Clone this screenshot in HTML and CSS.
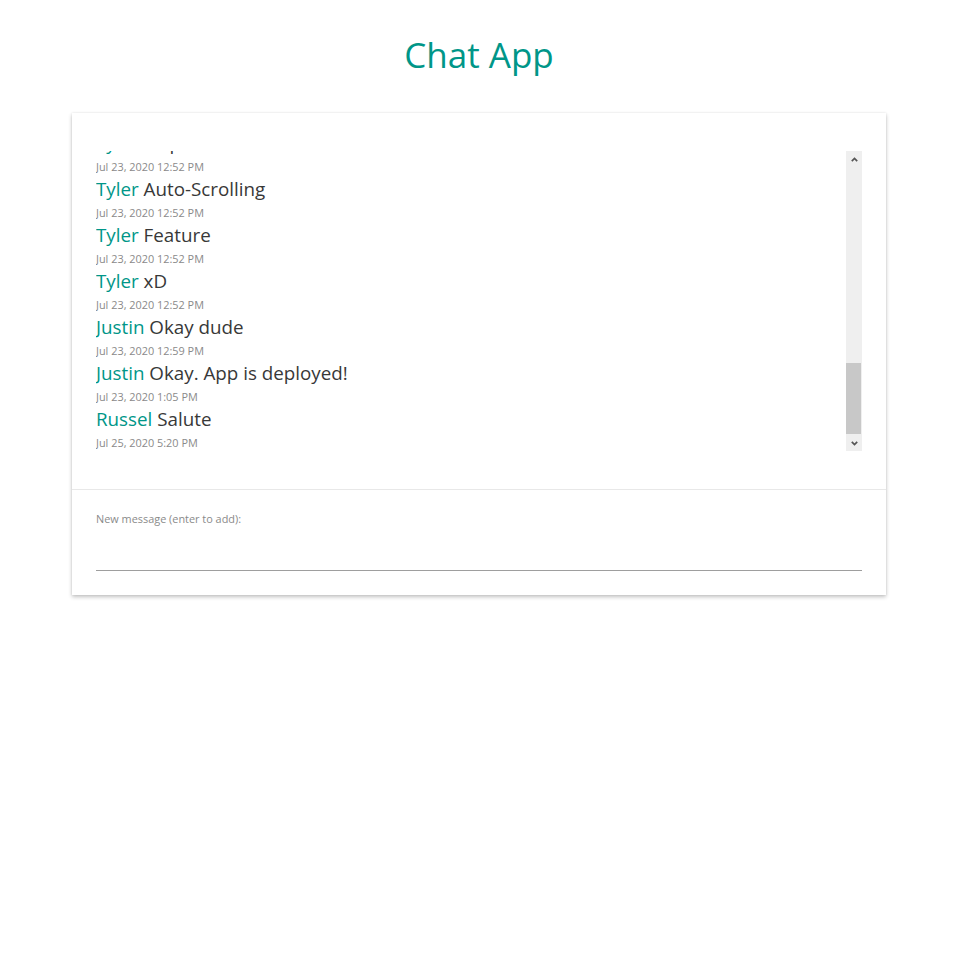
FILE: index.html
```html
<!DOCTYPE html>
<html lang="en">
<head>
<meta charset="utf-8">
<title>Chat App</title>
<link rel="stylesheet" href="styles.css">
</head>
<body>
<h1 class="title">Chat App</h1>
<main class="card">
  <section class="messages-wrap">
    <div class="messages">
      <div class="messages-inner">
        <div class="msg"><div class="line"><span class="name">Tyler</span> Test 2</div><div class="time">Jul 23, 2020 12:51 PM</div></div>
        <div class="msg"><div class="line"><span class="name">Tyler</span> Oops</div><div class="time">Jul 23, 2020 12:52 PM</div></div>
        <div class="msg"><div class="line"><span class="name">Tyler</span> Auto-Scrolling</div><div class="time">Jul 23, 2020 12:52 PM</div></div>
        <div class="msg"><div class="line"><span class="name">Tyler</span> Feature</div><div class="time">Jul 23, 2020 12:52 PM</div></div>
        <div class="msg"><div class="line"><span class="name">Tyler</span> xD</div><div class="time">Jul 23, 2020 12:52 PM</div></div>
        <div class="msg"><div class="line"><span class="name">Justin</span> Okay dude</div><div class="time">Jul 23, 2020 12:59 PM</div></div>
        <div class="msg"><div class="line"><span class="name">Justin</span> Okay. App is deployed!</div><div class="time">Jul 23, 2020 1:05 PM</div></div>
        <div class="msg"><div class="line"><span class="name">Russel</span> Salute</div><div class="time">Jul 25, 2020 5:20 PM</div></div>
      </div>
    </div>
    <div class="scrollbar" aria-hidden="true">
      <span class="sb-btn">
        <svg class="chev" width="7" height="5" viewBox="0 0 7 5"><path d="M0.8 4.2L3.5 1.4L6.2 4.2" fill="none" stroke="#555" stroke-width="1.7"/></svg>
      </span>
      <div class="sb-track"><div class="sb-thumb"></div></div>
      <span class="sb-btn">
        <svg class="chev" width="7" height="5" viewBox="0 0 7 5"><path d="M0.8 0.8L3.5 3.6L6.2 0.8" fill="none" stroke="#555" stroke-width="1.7"/></svg>
      </span>
    </div>
  </section>
  <form class="composer">
    <label class="label" for="new-msg">New message (enter to add):</label>
    <input class="input" id="new-msg" type="text">
  </form>
</main>
</body>
</html>
```
FILE: styles.css
```css
html, body {
  margin: 0;
  padding: 0;
  min-height: 100%;
  background: #ffffff;
  font-family: "Open Sans", "Noto Sans", sans-serif;
}

html {
  height: 100%;
}

.title {
  margin: 31px 0 34px;
  font-size: 35px;
  line-height: 48px;
  font-weight: 400;
  color: #009688;
  text-align: center;
}

.card {
  width: 814px;
  margin: 0 auto 40px;
  background: #fff;
  box-shadow: 0 2px 4px rgba(0, 0, 0, 0.24), 0 0 2px rgba(0, 0, 0, 0.08);
}

.messages-wrap {
  display: flex;
  padding: 38px 24px 38px;
  border-bottom: 1px solid #e8e8e8;
}

.messages {
  flex: 1;
  height: 300px;
  overflow: hidden;
  display: flex;
  flex-direction: column-reverse;
}

.scrollbar {
  width: 16px;
  height: 300px;
  display: flex;
  flex-direction: column;
  background: #efefef;
}

.sb-btn {
  height: 16px;
  display: flex;
  align-items: center;
  justify-content: center;
}

.chev {
  display: block;
}

.sb-track {
  flex: 1;
  display: flex;
  flex-direction: column;
  justify-content: flex-end;
  padding-bottom: 1px;
}

.sb-thumb {
  width: 15px;
  height: 71px;
  background: #c8c8c8;
}

.msg {
  margin-top: 2px;
}

.line {
  font-size: 18.8px;
  line-height: 24px;
  color: #383838;
  white-space: nowrap;
}

.name {
  color: #009688;
}

.time {
  margin-top: 4px;
  font-size: 10.9px;
  line-height: 16px;
  color: #8a8a8a;
}

.composer {
  display: flex;
  flex-direction: column;
  padding: 22px 24px 24px;
}

.label {
  font-size: 10.9px;
  line-height: 14px;
  color: #8a8a8a;
}

.input {
  height: 44px;
  border: 0;
  border-bottom: 1px solid #9e9e9e;
  padding: 0;
  outline: none;
  font-family: inherit;
  font-size: 16px;
  background: transparent;
}
```
